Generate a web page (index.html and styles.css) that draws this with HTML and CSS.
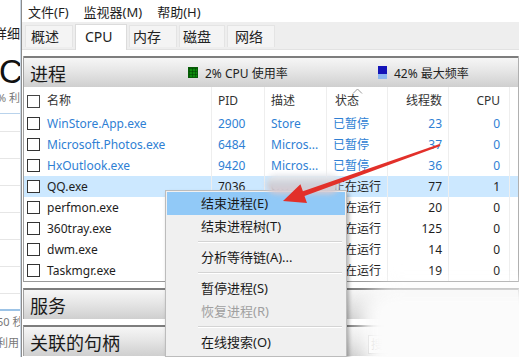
FILE: index.html
```html
<!DOCTYPE html>
<html lang="zh-CN">
<head>
    <meta charset="UTF-8">
    <title>任务管理器 - CPU</title>
    <link rel="stylesheet" href="styles.css">
</head>
<body>
    <div class="screen">
        <!-- window behind, only its right edge shows -->
        <div class="behind">
            <div class="bh-detail">详细</div>
            <div class="bh-big">CPU</div>
            <div class="bh-small">% 利用率</div>
            <div class="bh-graph">
                <div class="gline"></div><div class="gline"></div><div class="gline"></div>
                <div class="gline"></div><div class="gline"></div><div class="gline"></div>
                <div class="gline"></div>
            </div>
            <div class="bh-small bh-secs">50 秒</div>
            <div class="bh-small">利用</div>
        </div>

        <div class="window">
            <div class="menubar">
                <span>文件(F)</span>
                <span>监视器(M)</span>
                <span>帮助(H)</span>
            </div>
            <div class="tabs">
                <span class="tab">概述</span>
                <span class="tab active">CPU</span>
                <span class="tab">内存</span>
                <span class="tab">磁盘</span>
                <span class="tab">网络</span>
            </div>

            <div class="content">
                <div class="group">
                    <div class="group-head">
                        <span class="group-title">进程</span>
                        <span class="legend"><i class="swatch green"></i>2% CPU 使用率</span>
                        <span class="legend"><i class="swatch blue"></i>42% 最大频率</span>
                    </div>
                    <div class="table">
                        <div class="row head">
                            <div class="cell name"><i class="check"></i>名称</div>
                            <div class="cell">PID</div>
                            <div class="cell">描述</div>
                            <div class="cell sorted">状态
                                <svg class="sort-mark" width="11" height="6" viewBox="0 0 11 6"><polyline points="1,5.5 5.5,1 10,5.5" fill="none" stroke="#9a9a9a" stroke-width="1"/></svg>
                            </div>
                            <div class="cell num">线程数</div>
                            <div class="cell num last">CPU</div>
                            <div class="cell end"></div>
                        </div>
                        <div class="row paused">
                            <div class="cell name"><i class="check"></i>WinStore.App.exe</div>
                            <div class="cell">2900</div>
                            <div class="cell">Store</div>
                            <div class="cell">已暂停</div>
                            <div class="cell num">23</div>
                            <div class="cell num last">0</div>
                            <div class="cell end"></div>
                        </div>
                        <div class="row paused">
                            <div class="cell name"><i class="check"></i>Microsoft.Photos.exe</div>
                            <div class="cell">6484</div>
                            <div class="cell">Micros...</div>
                            <div class="cell">已暂停</div>
                            <div class="cell num">37</div>
                            <div class="cell num last">0</div>
                            <div class="cell end"></div>
                        </div>
                        <div class="row paused">
                            <div class="cell name"><i class="check"></i>HxOutlook.exe</div>
                            <div class="cell">9420</div>
                            <div class="cell">Micros...</div>
                            <div class="cell">已暂停</div>
                            <div class="cell num">36</div>
                            <div class="cell num last">0</div>
                            <div class="cell end"></div>
                        </div>
                        <div class="row selected">
                            <div class="cell name"><i class="check"></i>QQ.exe</div>
                            <div class="cell">7036</div>
                            <div class="cell">QQ</div>
                            <div class="cell">正在运行</div>
                            <div class="cell num">77</div>
                            <div class="cell num last">1</div>
                            <div class="cell end"></div>
                        </div>
                        <div class="row">
                            <div class="cell name"><i class="check"></i>perfmon.exe</div>
                            <div class="cell">5120</div>
                            <div class="cell">资源...</div>
                            <div class="cell">正在运行</div>
                            <div class="cell num">20</div>
                            <div class="cell num last">0</div>
                            <div class="cell end"></div>
                        </div>
                        <div class="row">
                            <div class="cell name"><i class="check"></i>360tray.exe</div>
                            <div class="cell">3388</div>
                            <div class="cell">360...</div>
                            <div class="cell">正在运行</div>
                            <div class="cell num">125</div>
                            <div class="cell num last">0</div>
                            <div class="cell end"></div>
                        </div>
                        <div class="row">
                            <div class="cell name"><i class="check"></i>dwm.exe</div>
                            <div class="cell">1012</div>
                            <div class="cell">桌面...</div>
                            <div class="cell">正在运行</div>
                            <div class="cell num">14</div>
                            <div class="cell num last">0</div>
                            <div class="cell end"></div>
                        </div>
                        <div class="row">
                            <div class="cell name"><i class="check"></i>Taskmgr.exe</div>
                            <div class="cell">8840</div>
                            <div class="cell">任务...</div>
                            <div class="cell">正在运行</div>
                            <div class="cell num">19</div>
                            <div class="cell num last">0</div>
                            <div class="cell end"></div>
                        </div>
                    </div>
                </div>

                <div class="group-head single">
                    <span class="group-title">服务</span>
                </div>
                <div class="group-head single handles">
                    <span class="group-title">关联的句柄</span>
                    <span class="search">搜索句柄</span>
                </div>
            </div>
        </div>

        <!-- right click menu -->
        <div class="ctx-menu">
            <div class="ctx-item hover">结束进程(E)</div>
            <div class="ctx-item">结束进程树(T)</div>
            <div class="ctx-sep"></div>
            <div class="ctx-item">分析等待链(A)...</div>
            <div class="ctx-sep"></div>
            <div class="ctx-item">暂停进程(S)</div>
            <div class="ctx-item disabled">恢复进程(R)</div>
            <div class="ctx-sep"></div>
            <div class="ctx-item">在线搜索(O)</div>
        </div>

        <!-- smudges left over from the screenshot -->
        <div class="smudge"></div>
        <div class="smudge-big"></div>

        <svg class="arrow" width="519" height="357" viewBox="0 0 519 357">
            <polygon points="439.6,143.9 302.9,191.2 300.4,184.2 283,201 307,203 304.5,196 440.4,146.1" fill="#e2302a"/>
        </svg>
    </div>
</body>
</html>
```

FILE: styles.css
```css
*{
    box-sizing: border-box;
}
body{
    margin: 0;
    background: #fff;
    font-family: "Noto Sans", "Noto Sans CJK SC", sans-serif;
    color: #1e1e1e;
}
.screen{
    position: relative;
    width: 519px;
    height: 357px;
    overflow: hidden;
    display: flex;
}

/* window behind */
.behind{
    width: 21px;
    flex-shrink: 0;
    overflow: hidden;
    background: #fff;
    border-right: 1px solid #c9d6e4;
    white-space: nowrap;
}
.bh-detail{
    margin: 24px 0 0 -6px;
    font-size: 13px;
    line-height: 18px;
}
.bh-big{
    margin: 12px 0 0 -1px;
    font-size: 33px;
    line-height: 36px;
    font-family: "Liberation Sans", sans-serif;
    color: #111;
}
.bh-small{
    margin-left: -3px;
    font-size: 11px;
    line-height: 16px;
    color: #777;
}
.bh-graph{
    margin-top: 7px;
    height: 198px;
    border-top: 1px solid #b9d3ec;
    display: flex;
    flex-direction: column;
    gap: 26px;
    padding-top: 17px;
    border-bottom: 2px solid #9cc3e6;
}
.gline{
    height: 1px;
    background: #e6e6e6;
}
.bh-secs{
    margin-top: 3px;
    margin-bottom: 5px;
}

/* main window */
.window{
    flex: 1;
    border-left: 1px solid #8c8c8c;
    display: flex;
    flex-direction: column;
    background: #fff;
}
.menubar{
    height: 22px;
    display: flex;
    align-items: center;
    gap: 15px;
    padding-left: 6px;
    font-size: 13px;
}
.tabs{
    height: 28px;
    background: #eeeeee;
    display: flex;
    align-items: flex-end;
    padding-left: 3px;
    gap: 2px;
    margin-right: 3px;
    border-bottom: 1px solid #e2e2e2;
}
.tab{
    height: 22px;
    width: 48px;
    margin-bottom: 2px;
    padding-left: 5px;
    font-size: 14px;
    line-height: 21px;
    background: #f4f4f4;
    border: 1px solid #e4e4e4;
    border-bottom: none;
    color: #222;
}
.tab.active{
    height: 26px;
    width: 52px;
    margin-bottom: -1px;
    padding-left: 9px;
    line-height: 23px;
    background: #fff;
    border-color: #dcdcdc;
}
.tab:nth-child(3){ padding-left: 3px; }
.tab:nth-child(4){ width: 46px; padding-left: 3px; }
.tab:nth-child(5){ padding-left: 7px; }

.content{
    flex: 1;
    padding: 6px 3px 0 1px;
    display: flex;
    flex-direction: column;
    gap: 6px;
}
.group{
    border-left: 1px solid #a0a0a0;
    border-right: 1px solid #b0b0b0;
    border-bottom: 1px solid #9a9a9a;
}
.group-head{
    height: 31px;
    flex-shrink: 0;
    border-top: 2px solid #7d7d7d;
    background: linear-gradient(#f6f6f6, #e6e6e6 45%, #cfcfcf);
    display: grid;
    grid-template-columns: 158px 190px auto;
    align-items: center;
    padding-left: 6px;
}
.group-head.single{
    border-left: 1px solid #a0a0a0;
    border-right: 1px solid #b0b0b0;
    grid-template-columns: 338px auto;
}
.group-title{
    font-size: 18px;
    color: #1a1a1a;
}
.legend{
    display: flex;
    align-items: center;
    gap: 7px;
    font-size: 12px;
    color: #222;
}
.swatch{
    width: 10px;
    height: 11px;
    display: block;
}
.swatch.green{
    background-color: #0b8a0b;
    background-image: linear-gradient(90deg, rgba(0,60,0,.5) 1px, transparent 1px), linear-gradient(rgba(0,60,0,.5) 1px, transparent 1px);
    background-size: 3px 3px;
    border: 1px solid #075c07;
}
.swatch.blue{
    width: 9px;
    height: 13px;
    background: linear-gradient(#1414b8 0 62%, #8cb6f0 62%);
}

/* process table */
.table{
    background: #fff;
}
.row{
    display: grid;
    grid-template-columns: 188px 53px 62px 61px 61px 61px 1fr;
    height: 21px;
    font-size: 12px;
    line-height: 21px;
}
.row.head{
    height: 26px;
    line-height: 28px;
    color: #333;
}
.cell{
    padding-left: 6px;
    border-right: 1px solid #eeeeee;
    white-space: nowrap;
    overflow: hidden;
}
.cell.end{
    border-right: none;
}
.cell.num{
    text-align: right;
    padding-right: 6px;
}
.cell.last{
    padding-right: 9px;
}
.cell.name{
    display: flex;
    align-items: center;
    gap: 7px;
    padding-left: 3px;
}
.row.head .cell.name{
    padding-top: 2px;
}
.cell.sorted{
    position: relative;
    padding-left: 8px;
}
.sort-mark{
    position: absolute;
    left: 25px;
    top: 1px;
}
.check{
    width: 13px;
    height: 13px;
    border: 1px solid #333;
    background: #fff;
    display: block;
    flex-shrink: 0;
}
.row.head .check{
    border-color: #444;
}
.row.paused{
    color: #2f7fd4;
}
.row.selected{
    background: #cce8ff;
}

.handles{
    position: relative;
}
.search{
    display: block;
    width: 150px;
    height: 19px;
    margin-top: 6px;
    border: 1px solid #a8a8a8;
    background: #fff;
    font-size: 12px;
    line-height: 17px;
    padding-left: 2px;
    color: #666;
}

/* context menu */
.ctx-menu{
    position: absolute;
    left: 165px;
    top: 190px;
    width: 182px;
    padding: 1px 1px 2px;
    background: #f0f0f0;
    border: 1px solid #bcbcbc;
    box-shadow: 2px 3px 4px rgba(0,0,0,.3);
}
.ctx-item{
    height: 23px;
    line-height: 23px;
    padding-left: 34px;
    font-size: 13px;
    color: #1a1a1a;
}
.ctx-item.hover{
    background: #91c9f7;
}
.ctx-item.disabled{
    color: #a0a0a0;
}
.ctx-sep{
    height: 8px;
    margin: 0 3px 0 31px;
    background: linear-gradient(transparent 3px, #d4d4d4 3px 4px, #fff 4px 5px, transparent 5px);
}

.smudge{
    position: absolute;
    left: 266px;
    top: 174px;
    width: 74px;
    height: 20px;
    border-radius: 10px;
    background: linear-gradient(#eef0f4, #cdd0d8 50%, #d9c7ce);
    filter: blur(2.5px);
}
.smudge-big{
    position: absolute;
    left: 362px;
    top: 286px;
    width: 180px;
    height: 90px;
    border-radius: 30px 0 0 30px;
    background: #fbfbfb;
    filter: blur(9px);
}
.arrow{
    position: absolute;
    left: 0;
    top: 0;
}
```
